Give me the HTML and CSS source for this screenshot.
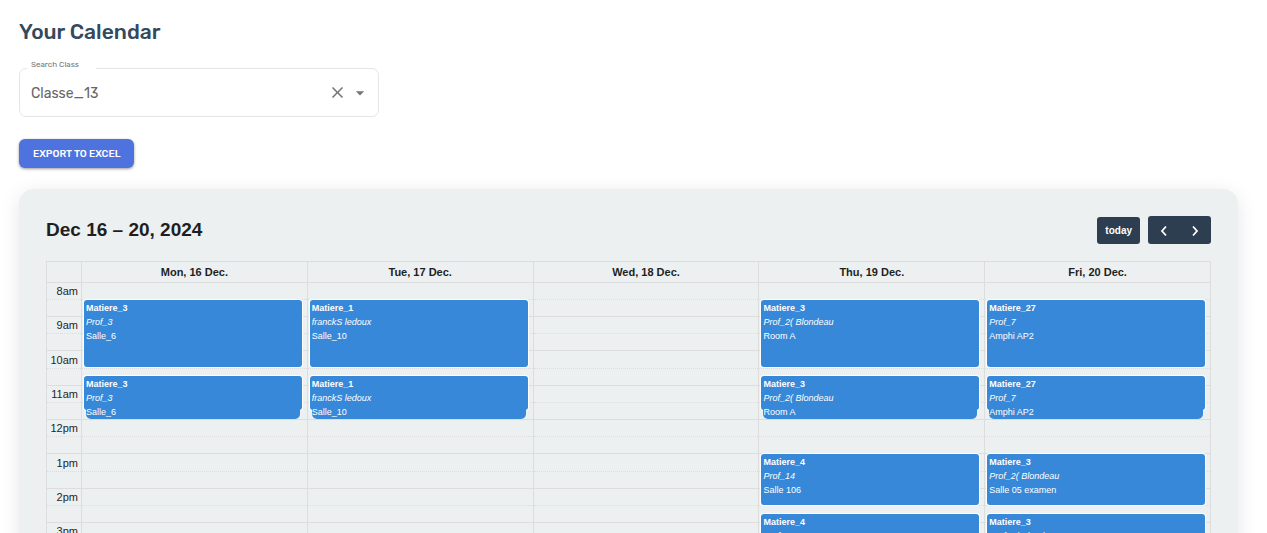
FILE: index.html
```html
<!DOCTYPE html>
<html lang="en">
<head>
<meta charset="utf-8">
<title>Your Calendar</title>
<link rel="stylesheet" href="styles.css">
</head>
<body>
<main class="page">
  <h1 class="page-title">Your Calendar</h1>

  <div class="field">
    <label class="field-label" for="class-search">Search Class</label>
    <input class="field-input" id="class-search" type="text" value="Classe_13">
    <button class="icon-button" type="button" aria-label="Clear">
      <svg viewBox="0 0 24 24" width="19" height="19"><path fill="currentColor" d="M19 6.41 17.59 5 12 10.59 6.41 5 5 6.41 10.59 12 5 17.59 6.41 19 12 13.41 17.59 19 19 17.59 13.41 12z"/></svg>
    </button>
    <button class="icon-button" type="button" aria-label="Open">
      <svg viewBox="0 0 24 24" width="24" height="24"><path fill="currentColor" d="m7 10 5 5 5-5z"/></svg>
    </button>
  </div>

  <button class="export-button" type="button">EXPORT TO EXCEL</button>

  <section class="card">
    <header class="toolbar">
      <h2 class="toolbar-title">Dec 16 – 20, 2024</h2>
      <div class="toolbar-actions">
        <button class="today-button" type="button">today</button>
        <div class="nav-group">
          <button class="nav-button" type="button" aria-label="Previous week">
            <svg viewBox="0 0 8 12" width="8" height="12"><path d="M6 1.5 2 6l4 4.500" fill="none" stroke="currentColor" stroke-width="1.800"/></svg>
          </button>
          <button class="nav-button" type="button" aria-label="Next week">
            <svg viewBox="0 0 8 12" width="8" height="12"><path d="m2 1.500 4 4.500-4 4.500" fill="none" stroke="currentColor" stroke-width="1.800"/></svg>
          </button>
        </div>
      </div>
    </header>

    <table class="week">
      <colgroup><col class="axis"><col><col><col><col><col></colgroup>
      <thead>
        <tr><td></td><th>Mon, 16 Dec.</th><th>Tue, 17 Dec.</th><th>Wed, 18 Dec.</th><th>Thu, 19 Dec.</th><th>Fri, 20 Dec.</th></tr>
      </thead>
      <tbody>
        <tr class="hour"><th>8am</th><td></td><td></td><td></td><td></td><td></td></tr>
        <tr class="half"><th></th>
          <td><div class="event long"><div class="event-text"><b>Matiere_3</b><i>Prof_3</i><span>Salle_6</span></div></div></td>
          <td><div class="event long"><div class="event-text"><b>Matiere_1</b><i>franckS ledoux</i><span>Salle_10</span></div></div></td>
          <td></td>
          <td><div class="event long"><div class="event-text"><b>Matiere_3</b><i>Prof_2( Blondeau</i><span>Room A</span></div></div></td>
          <td><div class="event long"><div class="event-text"><b>Matiere_27</b><i>Prof_7</i><span>Amphi AP2</span></div></div></td>
        </tr>
        <tr class="hour"><th>9am</th><td></td><td></td><td></td><td></td><td></td></tr>
        <tr class="half"><th></th><td></td><td></td><td></td><td></td><td></td></tr>
        <tr class="hour tall"><th>10am</th><td></td><td></td><td></td><td></td><td></td></tr>
        <tr class="half"><th></th>
          <td><div class="event short"><div class="event-text"><b>Matiere_3</b><i>Prof_3</i><span>Salle_6</span></div></div></td>
          <td><div class="event short"><div class="event-text"><b>Matiere_1</b><i>franckS ledoux</i><span>Salle_10</span></div></div></td>
          <td></td>
          <td><div class="event short"><div class="event-text"><b>Matiere_3</b><i>Prof_2( Blondeau</i><span>Room A</span></div></div></td>
          <td><div class="event short"><div class="event-text"><b>Matiere_27</b><i>Prof_7</i><span>Amphi AP2</span></div></div></td>
        </tr>
        <tr class="hour"><th>11am</th><td></td><td></td><td></td><td></td><td></td></tr>
        <tr class="half"><th></th><td></td><td></td><td></td><td></td><td></td></tr>
        <tr class="hour"><th>12pm</th><td></td><td></td><td></td><td></td><td></td></tr>
        <tr class="half"><th></th><td></td><td></td><td></td><td></td><td></td></tr>
        <tr class="hour tall"><th>1pm</th>
          <td></td><td></td><td></td>
          <td><div class="event"><div class="event-text"><b>Matiere_4</b><i>Prof_14</i><span>Salle 106</span></div></div></td>
          <td><div class="event"><div class="event-text"><b>Matiere_3</b><i>Prof_2( Blondeau</i><span>Salle 05 examen</span></div></div></td>
        </tr>
        <tr class="half"><th></th><td></td><td></td><td></td><td></td><td></td></tr>
        <tr class="hour"><th>2pm</th><td></td><td></td><td></td><td></td><td></td></tr>
        <tr class="half"><th></th>
          <td></td><td></td><td></td>
          <td><div class="event quarter"><div class="event-text"><b>Matiere_4</b><i>Prof_14</i><span>Salle 106</span></div></div></td>
          <td><div class="event quarter"><div class="event-text"><b>Matiere_3</b><i>Prof_2( Blondeau</i><span>Salle 05 examen</span></div></div></td>
        </tr>
        <tr class="hour"><th>3pm</th><td></td><td></td><td></td><td></td><td></td></tr>
        <tr class="half"><th></th><td></td><td></td><td></td><td></td><td></td></tr>
      </tbody>
    </table>
  </section>
</main>
</body>
</html>
```
FILE: styles.css
```css
* {
  box-sizing: border-box;
}

html {
  scrollbar-width: none;
}

body {
  margin: 0;
  background: #fff;
  color: #1f1f1f;
  font-family: "Liberation Sans", Arial, sans-serif;
  font-size: 11px;
}

button,
input {
  margin: 0;
  padding: 0;
  border: 0;
  background: none;
  font: inherit;
}

.page {
  padding: 18px 29px 24px 19px;
}

.page-title {
  margin: 0 0 22px;
  color: #34495e;
  font: 500 21px/28px Rubik, Roboto, sans-serif;
}

.field {
  position: relative;
  display: flex;
  align-items: center;
  gap: 3px;
  max-width: 360px;
  height: 49px;
  padding: 0 8px 0 11px;
  border: 1px solid #e6e6e6;
  border-radius: 7px;
  color: #666;
}

.field-label {
  position: absolute;
  top: -9px;
  left: 7px;
  width: 69px;
  padding-left: 4px;
  background: #fff;
  color: #777;
  font: 8px/10px Rubik, Roboto, sans-serif;
}

.field-input {
  flex: 1;
  min-width: 0;
  padding-top: 3px;
  color: #666;
  font: 14px/20px Rubik, Roboto, sans-serif;
  outline: none;
}

.icon-button {
  display: flex;
  align-items: center;
  justify-content: center;
  width: 20px;
  height: 20px;
  color: #757575;
}

.export-button {
  display: block;
  height: 29px;
  margin: 22px 0 21px;
  padding: 0 14px;
  border-radius: 6px;
  background: #4e73df;
  box-shadow: 0 1px 3px rgba(0, 0, 0, 0.4);
  color: #fff;
  font: 500 10px/28px Rubik, Roboto, sans-serif;
}

.card {
  padding: 27px;
  border-radius: 15px;
  background: #ecf0f1;
  box-shadow: 0 4px 20px rgba(0, 0, 0, 0.1);
}

.toolbar {
  display: flex;
  align-items: center;
  justify-content: space-between;
  margin-bottom: 17px;
}

.toolbar-title {
  margin: 0;
  font-size: 19px;
  line-height: 28px;
}

.toolbar-actions {
  display: flex;
  align-items: flex-end;
  gap: 8px;
}

.today-button {
  height: 27px;
  padding: 0 8px;
  border-radius: 3px;
  background: #2c3e50;
  color: #fff;
  font-size: 10px;
  font-weight: 700;
}

.nav-group {
  display: flex;
  padding-right: 1px;
  border-radius: 3px;
  background: #2c3e50;
}

.nav-button {
  display: flex;
  align-items: center;
  justify-content: center;
  width: 31px;
  height: 28px;
  padding-top: 2px;
  color: #fff;
}

.week {
  width: 100%;
  border-collapse: collapse;
  table-layout: fixed;
  border: 1px solid #ddd;
}

.axis {
  width: 35px;
}

.week th,
.week td {
  position: relative;
  padding: 0;
  border: 1px solid #ddd;
}

.week thead th {
  height: 21px;
  line-height: 18px;
}

.week tbody th {
  padding-right: 3px;
  font-weight: 400;
  line-height: 16px;
  text-align: right;
}

.week tbody tr {
  height: 17px;
}

.week tbody .tall {
  height: 18px;
}

.hour > th,
.hour > td {
  border-bottom-style: dotted;
}

.half > th,
.half > td {
  border-top-style: dotted;
}

.event {
  position: absolute;
  z-index: 1;
  top: 0;
  left: 2px;
  right: 5px;
  height: 51px;
  padding: 1px 2px;
  border-radius: 3px;
  background: #3788d8;
  box-shadow: 0 0 0 1px #fff;
  color: #fff;
  font-size: 9px;
  line-height: 14px;
}

.event.long {
  height: 67px;
}

.event.short {
  top: 7px;
  height: 34px;
}

.event.quarter {
  top: 8px;
}

.event-text {
  display: flex;
  flex-direction: column;
  border-radius: 5px;
  background: #3788d8;
}
```
